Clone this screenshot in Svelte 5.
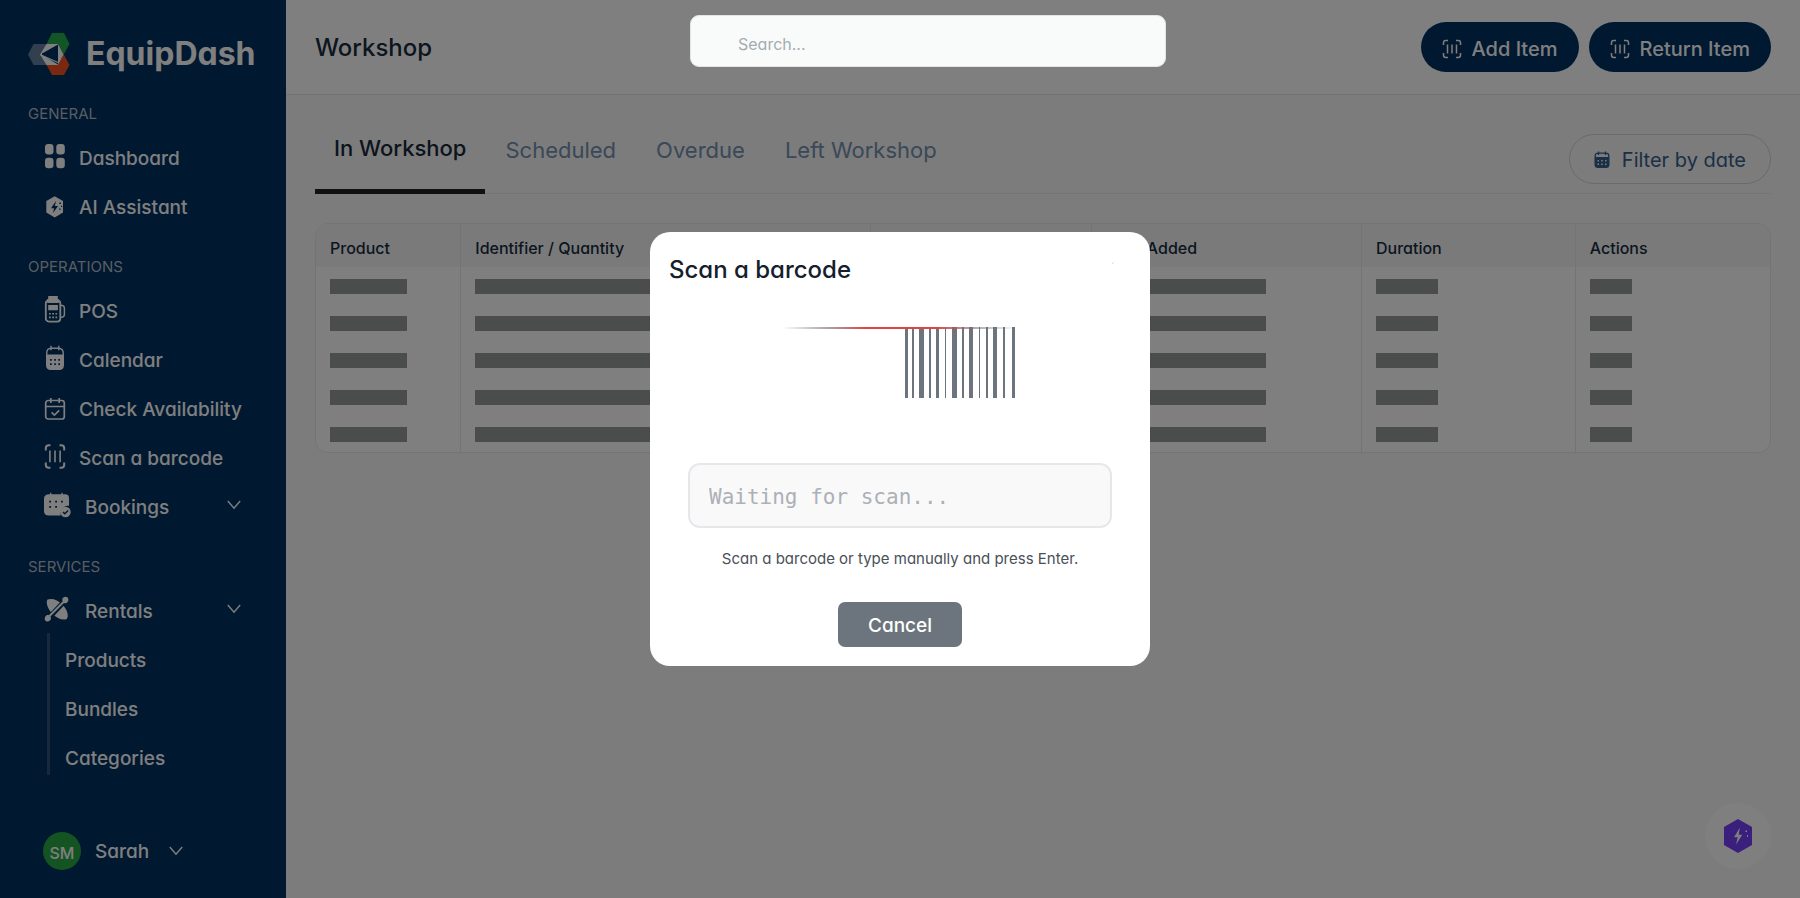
<script>
  const general = [
    { icon: 'grid', label: 'Dashboard' },
    { icon: 'ai', label: 'AI Assistant' }
  ];
  const operations = [
    { icon: 'pos', label: 'POS' },
    { icon: 'calendar', label: 'Calendar' },
    { icon: 'check', label: 'Check Availability' },
    { icon: 'scan', label: 'Scan a barcode' },
    { icon: 'bookings', label: 'Bookings', menu: true }
  ];
  const services = [{ icon: 'rentals', label: 'Rentals', menu: true }];
  const rentals = ['Products', 'Bundles', 'Categories'];
  const tabs = ['In Workshop', 'Scheduled', 'Overdue', 'Left Workshop'];
  const columns = [
    { label: 'Product', share: 145, bar: 77 },
    { label: 'Identifier / Quantity', share: 410, bar: 240 },
    { label: '', share: 222, bar: 120 },
    { label: 'Date Added', share: 270, bar: 160 },
    { label: 'Duration', share: 214, bar: 62 },
    { label: 'Actions', share: 195, bar: 42 }
  ];
  const total = columns.reduce((sum, c) => sum + c.share, 0);
  const rows = [1, 2, 3, 4, 5];
  // x offset and width of each bar in the barcode
  const bars = [
    [0, 3], [7, 2], [14, 5], [24, 2], [31, 3], [40, 1], [47, 5], [57, 2],
    [64, 4], [74, 1], [81, 2], [88, 4], [98, 2], [107, 3]
  ];
  let code = $state('');
  let query = $state('');
</script>

{#snippet icon(name)}
  <svg class="icon" viewBox="0 0 28 28" aria-hidden="true">
    {#if name === 'grid'}
      <g fill="currentColor">
        <rect x="2" y="-1" width="8.5" height="10.5" rx="3.2" />
        <rect x="13.3" y="-1" width="8.5" height="10.5" rx="3.2" />
        <rect x="2" y="12.8" width="8.5" height="10.5" rx="3.2" />
        <rect x="13.3" y="12.8" width="8.5" height="10.5" rx="3.2" />
      </g>
    {:else if name === 'ai'}
      <path fill="currentColor" d="M11.7 2.2 20 7v11.5l-8.3 4.9-8.4-4.9V7z" />
      <path class="hole" d="m13 7-5 7.3h3.1L10 19l5-7h-3.2z" />
      <path class="hole" d="M16.4 8.4h1.5v1.5h-1.5zM18 11.8h1.2V13H18zM16.2 14.4h1.4v1.4h-1.4z" />
    {:else if name === 'pos'}
      <path fill="currentColor" d="M5.2-2h9.6v4.5H5.200z" />
      <rect x="2.800" y="2.300" width="14.500" height="21.300" rx="3" fill="none" stroke="currentColor" stroke-width="1.800" />
      <path fill="currentColor" d="M4.200 1h11.600v4H4.200zM5.200 7h9.700v5.200H5.200z" />
      <path d="M17.500 7.200c3.200 0 3.900.8 3.900 2.800v6.600c0 2-.8 2.800-3.900 2.800" fill="none" stroke="currentColor" stroke-width="1.500" />
      <path fill="currentColor" d="M6 15h1.800v1.600H6zM9.200 15H11v1.600H9.200zM12.400 15h1.800v1.600h-1.800zM6 18.600h1.800v1.600H6zM9.200 18.600H11v1.600H9.200zM12.400 18.600h1.800v1.600h-1.800z" />
    {:else if name === 'calendar'}
      <path fill="currentColor" d="M3 7.500h18v10c0 3.800-1.600 5.500-5.200 5.500H8.200C4.600 23 3 21.300 3 17.500z" />
      <path d="M3.700 8V6.700C3.700 2.800 5 1.200 8.500 1.200h7c3.500 0 4.800 1.600 4.800 5.500V8M8 -1.200v4.500M15.800-1.200v4.500" fill="none" stroke="currentColor" stroke-width="1.400" />
      <path class="hole" d="M7 12h1.700v1.700H7zM11.200 12h1.700v1.700h-1.700zM15.300 12H17v1.700h-1.700zM7 16.300h1.700V18H7zM11.200 16.300h1.700V18h-1.700zM15.300 16.300H17V18h-1.700z" />
    {:else if name === 'check'}
      <g fill="none" stroke="currentColor" stroke-width="1.700">
        <rect x="2.700" y="4.500" width="18.600" height="18.500" rx="2.500" />
        <path d="M2.700 10.500h18.600M7.800 2v5M16.200 2v5M8.600 16.300l2.800 2.700 4.800-4.600" />
      </g>
    {:else if name === 'scan'}
      <g fill="none" stroke="currentColor" stroke-width="2">
        <path d="M2.800 5.500V3.200c0-2 .9-3 3-3h1.700M16.500.2h1.700c2.100 0 3 1 3 3v2.300M21.200 17.500v2.300c0 2-.9 3-3 3h-1.700M7.500 22.800H5.800c-2.100 0-3-1-3-3v-2.300" />
        <path d="M6.900 5.500v11.800M12 5.500v11.800M17.100 5.500v11.800" stroke-width="1.600" />
      </g>
    {:else if name === 'bookings'}
      <path fill="currentColor" d="M6 .3h16c2.900 0 4 1.200 4 4v7.500c-5-.6-9 3.500-8.300 9.700H5.800c-3 0-4.800-1.400-4.800-4.500V4.800C1 1.800 2.800.3 6 .3z" />
      <path d="M7.700-1.200v3M19-1.200v3" stroke="currentColor" stroke-width="1.300" />
      <path class="hole" d="M6.200 6.700H8v1.800H6.200zM12.200 6.700H14v1.800h-1.800zM18 6.700h1.800v1.800H18zM6.200 12H8v1.800H6.200zM12.200 12H14v1.800h-1.800z" />
      <circle cx="22.500" cy="18" r="5.200" fill="currentColor" />
      <path d="m20 18 1.800 1.800 3.300-3.200" class="cut" />
    {:else if name === 'rentals'}
      <path fill="currentColor" d="M4.500 1.500C9-.2 15 1.800 19.400 6.500c4.900 5.100 6.800 11.700 4.300 14.400-3.700 1.700-9.800-.3-14.200-4.900C4.700 11.100 2.500 4.500 4.500 1.500z" />
      <path d="m2 24 22.500-24" class="cut wide" />
      <path d="M5 19.500 22.500 2" stroke="currentColor" stroke-width="2" />
      <path fill="currentColor" d="M3.300 17.500c2-1.500 5.300 1 4.600 3.600-.7 2.500-3.500 3.200-5.300 1.800-1.500-1.300-1.100-4 .7-5.400zM19.300 1.200c.3-2.200 3.500-3.400 5.300-1.700 1.500 1.500.9 5.300-1.900 5.700-2.200.3-3.700-1.700-3.400-4z" />
    {/if}
  </svg>
{/snippet}

{#snippet chevron()}
  <svg class="chevron" viewBox="0 0 14 10" aria-hidden="true">
    <path d="M.8 1 7 8.200 13.200 1" fill="none" stroke="currentColor" stroke-width="1.400" />
  </svg>
{/snippet}

{#snippet group(title, items)}
  <h2>{title}</h2>
  <ul>
    {#each items as item}
      <li>
        <a href="#{item.icon}" class:parent={item.menu}>
          {@render icon(item.icon)}
          <span>{item.label}</span>
          {#if item.menu}{@render chevron()}{/if}
        </a>
      </li>
    {/each}
  </ul>
{/snippet}

{#snippet scanGlyph()}
  <svg class="glyph" viewBox="0 0 20 20" aria-hidden="true">
    <g fill="none" stroke="currentColor" stroke-width="1.500">
      <path d="M1.500 6V3.700c0-1.500.7-2.200 2.200-2.200H6M14 1.500h2.300c1.500 0 2.200.7 2.200 2.200V6M18.500 14v2.300c0 1.500-.7 2.200-2.200 2.200H14M6 18.500H3.700c-1.500 0-2.200-.7-2.200-2.200V14" />
      <path d="M5.500 5.500v9M10 5.500v9M14.500 5.500v9" />
    </g>
  </svg>
{/snippet}

<div class="app">
  <aside>
    <a class="brand" href="#home">
      <svg viewBox="0 0 42 42" aria-hidden="true">
        <path fill="#24ac50" d="M24 0h12l5.500 11-6 11L30 11H18.500z" />
        <path fill="#f4511e" d="m35.500 21 6 11L36 42H24l-5.500-10H30z" />
        <path fill="#647f9c" d="M5.500 11H19l-7 10.500L19 32H5.500L0 21.500z" />
        <path fill="#fff" d="M18.500 11H30l5.500 10.500L30 32H18.500L12 21.500z" />
        <path fill="#003060" d="m14 20.500 16-9v20L14 22z" />
        <path stroke="#fff" stroke-width="1.200" d="m12 21.500 18 8" />
      </svg>
      <span>EquipDash</span>
    </a>
    <nav>
      {@render group('GENERAL', general)}
      {@render group('OPERATIONS', operations)}
      {@render group('SERVICES', services)}
      <ul class="sub">
        {#each rentals as name}
          <li><a href="#{name}">{name}</a></li>
        {/each}
      </ul>
    </nav>
    <button class="user">
      <span class="avatar">SM</span>
      <span>Sarah</span>
      {@render chevron()}
    </button>
  </aside>

  <main>
    <header>
      <h1>Workshop</h1>
      <input class="search" type="search" aria-label="Search" placeholder="Search..." bind:value={query} />
      <div class="actions">
        <button>{@render scanGlyph()}Add Item</button>
        <button>{@render scanGlyph()}Return Item</button>
      </div>
    </header>

    <section>
      <div class="toolbar">
        <div class="tabs" role="tablist">
          {#each tabs as tab, i}
            <button role="tab" aria-selected={i === 0} class:active={i === 0}>{tab}</button>
          {/each}
        </div>
        <button class="filter">
          <svg viewBox="0 0 16 18" aria-hidden="true">
            <path fill="currentColor" d="M.5 6h15v7.500c0 2.500-1.200 3.500-3.500 3.500H4C1.700 17 .5 16 .5 13.500z" />
            <path d="M1.200 6V5c0-1.900.9-2.800 2.800-2.800h8c1.900 0 2.800.9 2.800 2.800v1M4.500.5V4M11.500.5V4" fill="none" stroke="currentColor" stroke-width="1.300" />
            <path fill="#f8f8f8" d="M3.500 9H5v1.500H3.500zM7.200 9h1.500v1.500H7.200zM11 9h1.500v1.500H11zM3.500 12.500H5V14H3.500zM7.200 12.500h1.500V14H7.200zM11 12.500h1.500V14H11z" />
          </svg>
          Filter by date
        </button>
      </div>

      <div class="card">
        <table>
          <colgroup>
            {#each columns as c}<col style="width: {(c.share / total) * 100}%" />{/each}
          </colgroup>
          <thead>
            <tr>{#each columns as c}<th scope="col">{c.label}</th>{/each}</tr>
          </thead>
          <tbody>
            {#each rows as row (row)}
              <tr>
                {#each columns as c}
                  <td><div class="bar" style="width: {c.bar}px"></div></td>
                {/each}
              </tr>
            {/each}
          </tbody>
        </table>
      </div>
    </section>
  </main>

  <button class="assistant" aria-label="AI Assistant">
    <svg viewBox="0 0 28 34" aria-hidden="true">
      <path fill="#763ef8" d="m14 0 14 8v18l-14 8-14-8V8z" />
      <path fill="#fff" d="M16 8.500 10 18.300h3.700L12 25.500l6.300-9.800h-3.700zM21.500 11.500H23V13h-1.500zM23 16h1v2h-1z" />
    </svg>
  </button>

  <div class="overlay">
    <div class="dialog" role="dialog" aria-modal="true" aria-labelledby="scan-title">
      <div class="dialog-head">
        <h2 id="scan-title">Scan a barcode</h2>
        <button class="close" aria-label="Close">
          <svg viewBox="0 0 4 4" aria-hidden="true"><path d="m1 3 2-2" stroke="#d5d7da" /></svg>
        </button>
      </div>
      <svg class="barcode" viewBox="0 0 236 72" aria-hidden="true">
        <defs>
          <linearGradient id="beam">
            <stop offset="0" stop-color="#6c757d" stop-opacity="0" />
            <stop offset=".2" stop-color="#8b7478" stop-opacity=".7" />
            <stop offset=".35" stop-color="#e04444" />
            <stop offset=".65" stop-color="#e04444" />
            <stop offset=".85" stop-color="#6c757d" stop-opacity=".5" />
            <stop offset="1" stop-color="#6c757d" stop-opacity="0" />
          </linearGradient>
        </defs>
        {#each bars as [x, w]}
          <rect x={123 + x} y="0" width={w} height="71" fill="#6c757d" />
        {/each}
        <rect y="0" width="236" height="2" fill="url(#beam)" />
      </svg>
      <input class="code" type="text" aria-label="Barcode" placeholder="Waiting for scan..." bind:value={code} />
      <p>Scan a barcode or type manually and press Enter.</p>
      <button class="cancel">Cancel</button>
    </div>
  </div>
</div>

<style>
  :global(body) {
    margin: 0;
  }
  .app,
  .app :is(button, input) {
    font-family: Inter, "Liberation Sans", sans-serif;
    font-feature-settings: "cv11", "ss03";
  }
  .app {
    display: flex;
    min-height: 100vh;
    color: #182c3e;
    background: #f8f8f8;
  }
  .app * {
    box-sizing: border-box;
  }
  h1,
  h2,
  p,
  ul {
    margin: 0;
    padding: 0;
    font-weight: 400;
    list-style: none;
  }
  button {
    margin: 0;
    padding: 0;
    border: 0;
    background: none;
    color: inherit;
    cursor: pointer;
  }
  a {
    color: inherit;
    text-decoration: none;
  }
  svg {
    flex: none;
    overflow: visible;
  }

  aside {
    display: flex;
    flex: none;
    flex-direction: column;
    width: 286px;
    padding: 32px 28px 28px;
    background: #003060;
    color: #fff;
  }
  .brand {
    display: flex;
    align-items: center;
    gap: 16px;
    height: 43px;
    font-size: 32px;
    font-weight: 700;
  }
  .brand svg {
    width: 42px;
    height: 42px;
  }
  nav {
    padding-top: 4px;
  }
  nav h2 {
    margin: 25px 0 10px;
    color: #b2bcc6;
    font-size: 15px;
    line-height: 20px;
  }
  nav a {
    display: flex;
    align-items: center;
    gap: 8px;
    height: 49px;
    padding-left: 15px;
    font-size: 19px;
    font-weight: 500;
    white-space: nowrap;
  }
  nav a.parent {
    gap: 14px;
  }
  .icon {
    width: 28px;
    height: 28px;
  }
  .hole {
    fill: #003060;
  }
  .cut {
    fill: none;
    stroke: #003060;
    stroke-width: 1.400;
  }
  .cut.wide {
    stroke-width: 5;
  }
  .chevron {
    width: 14px;
    height: 10px;
  }
  nav .chevron {
    margin: 0 17px 6px auto;
  }
  .sub {
    position: relative;
  }
  .sub::before {
    position: absolute;
    top: -3px;
    bottom: 8px;
    left: 19px;
    width: 3px;
    background: #345272;
    content: "";
  }
  .sub a {
    padding-left: 37px;
  }
  .user {
    display: flex;
    align-items: center;
    gap: 14px;
    margin-top: auto;
    padding-left: 15px;
    font-size: 19px;
    font-weight: 500;
  }
  .user .chevron {
    margin-left: 6px;
  }
  .avatar {
    display: grid;
    place-items: center;
    width: 38px;
    height: 38px;
    padding-top: 3px;
    border-radius: 50%;
    background: #28a745;
    font-size: 16px;
  }

  main {
    flex: 1;
    min-width: 0;
  }
  header {
    display: flex;
    align-items: center;
    height: 95px;
    padding: 0 29px;
    border-bottom: 1px solid #e6e6e6;
    background: #fff;
  }
  h1 {
    flex: 0 0 375px;
    font-size: 24px;
    font-weight: 500;
  }
  .search {
    position: relative;
    z-index: 3;
    flex: 0 1 476px;
    align-self: flex-start;
    height: 52px;
    margin-top: 15px;
    padding: 6px 47px 0;
    border: 1px solid #e2e5e7;
    border-radius: 9px;
    outline: 0;
    background: #f9fbfb;
    font-size: 16px;
  }
  .search::placeholder {
    color: #a5abb1;
  }
  .actions {
    display: flex;
    gap: 10px;
    margin-left: auto;
  }
  .actions button {
    display: flex;
    align-items: center;
    gap: 10px;
    height: 50px;
    padding: 3px 21px 0;
    border-radius: 25px;
    background: #003060;
    color: #fff;
    font-size: 20px;
    font-weight: 500;
    white-space: nowrap;
  }
  .glyph {
    width: 20px;
    height: 20px;
  }

  section {
    padding: 39px 29px;
  }
  .toolbar {
    display: flex;
    justify-content: space-between;
    height: 60px;
    border-bottom: 1px solid #e9e9e9;
  }
  .tabs {
    display: flex;
    align-items: flex-start;
    gap: 40px;
  }
  .tabs button {
    height: 32px;
    color: #7490b0;
    font-size: 22px;
    line-height: 32px;
    white-space: nowrap;
  }
  .tabs .active {
    height: 60px;
    margin-right: -20px;
    padding: 0 19px 28px;
    border-bottom: 5px solid #222;
    color: #182838;
    font-weight: 500;
    line-height: 28px;
  }
  .filter {
    display: flex;
    align-items: center;
    gap: 12px;
    height: 50px;
    padding: 2px 24px 0;
    border: 1px solid #d3d4de;
    border-radius: 25px;
    color: #365f8c;
    font-size: 20px;
    white-space: nowrap;
  }
  .filter svg {
    width: 16px;
    height: 18px;
  }
  .card {
    margin-top: 29px;
    overflow: hidden;
    border: 1px solid #e9e9e9;
    border-radius: 13px;
    background: #fff;
  }
  table {
    width: 100%;
    border-collapse: collapse;
    table-layout: fixed;
  }
  th,
  td {
    padding: 0 14px;
    text-align: left;
  }
  th + th,
  td + td {
    border-left: 1px solid #e9e9e9;
  }
  th {
    height: 43px;
    padding-top: 4px;
    background: #f5f5f5;
    font-size: 16px;
    font-weight: 500;
  }
  td {
    height: 37px;
    padding-top: 2px;
  }
  .bar {
    height: 15px;
    background: #959a98;
  }

  .assistant {
    position: fixed;
    right: 29px;
    bottom: 29px;
    display: grid;
    place-items: center;
    width: 66px;
    height: 66px;
    border-radius: 50%;
    background: #fff;
  }
  .assistant svg {
    width: 28px;
    height: 34px;
  }

  .overlay {
    position: fixed;
    z-index: 2;
    inset: 0;
    display: grid;
    place-items: center;
    background: rgb(0 0 0 / 50%);
  }
  .dialog {
    display: flex;
    flex-direction: column;
    align-items: center;
    width: 500px;
    padding: 19px;
    border-radius: 20px;
    background: #fff;
  }
  .dialog-head {
    display: flex;
    justify-content: space-between;
    align-self: stretch;
  }
  .dialog h2 {
    color: #14202b;
    font-size: 24px;
    font-weight: 500;
    line-height: 38px;
  }
  .close {
    width: 36px;
    height: 18px;
  }
  .close svg {
    width: 4px;
    height: 4px;
  }
  .barcode {
    width: 236px;
    height: 72px;
    margin: 38px 0 64px;
  }
  .code {
    width: 424px;
    height: 65px;
    padding: 2px 19px 0;
    border: 2px solid #e5e7eb;
    border-radius: 12px;
    outline: 0;
    background: #f9f9f9;
  }
  .app .code {
    font-family: "DejaVu Sans Mono", monospace;
    font-size: 21px;
  }
  .code::placeholder {
    color: #adb0b6;
  }
  .dialog p {
    margin: 20px 0 32px;
    color: #495057;
    font-size: 15px;
    line-height: 22px;
  }
  .cancel {
    height: 45px;
    padding: 2px 30px 0;
    border-radius: 7px;
    background: #6c757d;
    color: #fff;
    font-size: 19px;
    font-weight: 500;
  }
</style>
